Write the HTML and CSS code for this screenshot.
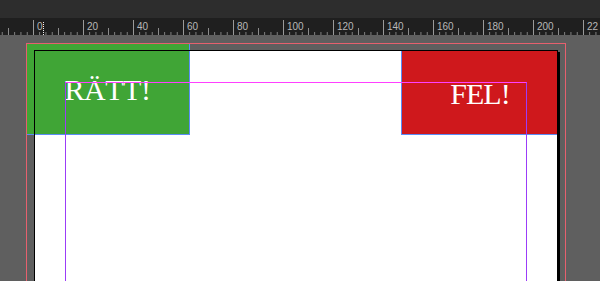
FILE: index.html
```html
<!DOCTYPE html>
<html>
<head>
    <title>Layout - RÄTT / FEL</title>
    <link rel="stylesheet" href="styles.css">
</head>
<body>
    <div class="topbar"></div>

    <div class="ruler">
        <div class="ruler-lead"></div>
        <div class="ruler-cell"><span>0</span><i class="cursor"></i></div>
        <div class="ruler-cell"><span>20</span></div>
        <div class="ruler-cell"><span>40</span></div>
        <div class="ruler-cell"><span>60</span></div>
        <div class="ruler-cell"><span>80</span></div>
        <div class="ruler-cell"><span>100</span></div>
        <div class="ruler-cell"><span>120</span></div>
        <div class="ruler-cell"><span>140</span></div>
        <div class="ruler-cell"><span>160</span></div>
        <div class="ruler-cell"><span>180</span></div>
        <div class="ruler-cell"><span>200</span></div>
        <div class="ruler-cell ruler-last"><span>22</span></div>
    </div>

    <div class="pasteboard">
        <div class="bleed">
            <div class="page">
                <div class="frame frame-right">RÄTT!</div>
                <div class="frame frame-wrong">FEL!</div>
                <div class="margins"></div>
            </div>
        </div>
    </div>
</body>
</html>
```

FILE: styles.css
```css
body {
    margin: 0;
    width: 600px;
    height: 281px;
    overflow: hidden;
    background: #5f5f5f;
    font-family: "Liberation Sans", Arial, sans-serif;
}
.topbar {
    height: 18px;
    background: #2d2d2d;
}

/* ruler */
.ruler {
    display: flex;
    height: 17px;
    background-color: #1f1f1f;
    background-image:
        linear-gradient(to right, #8c8c8c 1px, transparent 1px),
        linear-gradient(to right, #8c8c8c 1px, transparent 1px);
    background-size: 25px 7px, 6.25px 3px;
    background-position: 8px bottom, 1.75px bottom;
    background-repeat: repeat-x;
    overflow: hidden;
}
.ruler-lead {
    flex: 0 0 33px;
}
.ruler-cell {
    flex: 0 0 50px;
    position: relative;
    height: 15px;
    margin-top: 2px;
    border-left: 1px solid #9a9a9a;
    box-sizing: border-box;
}
.ruler-last {
    flex-basis: 17px;
}
.ruler-cell span {
    display: block;
    padding: 2px 0 0 3px;
    font-size: 10px;
    line-height: 10px;
    color: #b8b8b8;
}
.cursor {
    position: absolute;
    left: 9px;
    top: 2px;
    height: 13px;
    border-left: 1px dotted #f0f0f0;
}

/* document */
.pasteboard {
    padding: 8px 0 0 26px;
}
.bleed {
    position: relative;
    width: 540px;
    height: 238px;
    box-sizing: border-box;
    padding: 7px 0 0 8px;
}
.bleed::after {
    content: "";
    position: absolute;
    inset: 0;
    border: 1px solid #e6606e;
    border-bottom: none;
    z-index: 4;
}
.page {
    position: relative;
    width: 524px;
    height: 231px;
    background: #fff;
    box-shadow: 2px 2px 0 #000;
}
.page::after {
    content: "";
    position: absolute;
    inset: 0;
    border: 1px solid #000;
    border-bottom: none;
    z-index: 2;
}
.frame {
    position: absolute;
    z-index: 1;
    box-sizing: border-box;
    display: flex;
    align-items: center;
    justify-content: center;
    padding-top: 3px;
    color: #fff;
    font-family: "Liberation Serif", "Times New Roman", serif;
    font-size: 30px;
    border-bottom: 1px solid #5b8cf6;
}
.frame-right {
    left: -8px;
    top: -7px;
    width: 164px;
    height: 92px;
    background: #40a536;
    border-right: 1px solid #5b8cf6;
    letter-spacing: -0.5px;
}
.frame-wrong {
    left: 367px;
    top: 0;
    width: 157px;
    height: 85px;
    background: #cf181c;
    border-left: 1px solid #5b8cf6;
    letter-spacing: -1px;
}
.margins {
    position: absolute;
    z-index: 3;
    left: 31px;
    top: 32px;
    width: 462px;
    height: 199px;
    box-sizing: border-box;
    border-top: 1px solid #ff40ff;
    border-left: 1px solid #9b3cf8;
    border-right: 1px solid #9b3cf8;
}
```
